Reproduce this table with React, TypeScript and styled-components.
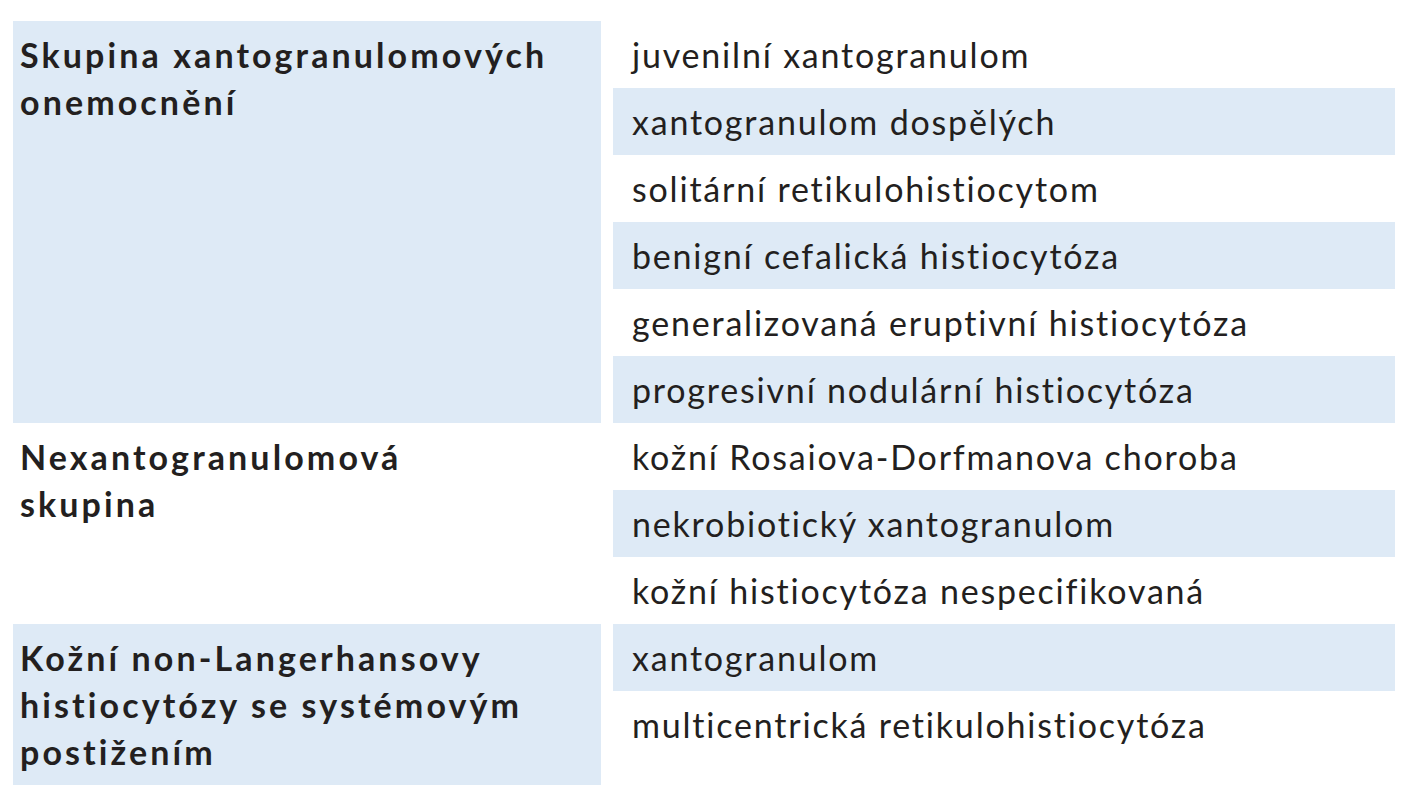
import { Fragment } from 'react';
import styled, { createGlobalStyle } from 'styled-components';

const GlobalStyle = createGlobalStyle`
  body {
    margin: 0;
    background: #ffffff;
    font-family: Lato, "Noto Sans", sans-serif;
    color: #231f20;
  }
`;

const blue = '#deeaf6';

const Table = styled.div`
  display: grid;
  grid-template-columns: 588px 782px;
  column-gap: 12px;
  padding: 21px 0 0 13px;
`;

const Category = styled.div<{ $shaded: boolean }>`
  background: ${(props) => (props.$shaded ? blue : 'transparent')};
  padding: 10px 6px 10px 7px;
  font-size: 34px;
  font-weight: 700;
  line-height: 47px;
  letter-spacing: 3.1px;
`;

const Items = styled.div`
  display: flex;
  flex-direction: column;
`;

const Item = styled.div<{ $shaded: boolean }>`
  display: flex;
  align-items: center;
  height: 67px;
  padding-left: 19px;
  background: ${(props) => (props.$shaded ? blue : 'transparent')};
  font-size: 34px;
  letter-spacing: 1.8px;
  white-space: nowrap;
`;

const groups = [
  {
    title: ['Skupina xantogranulomových', 'onemocnění'],
    shaded: true,
    items: [
      'juvenilní xantogranulom',
      'xantogranulom dospělých',
      'solitární retikulohistiocytom',
      'benigní cefalická histiocytóza',
      'generalizovaná eruptivní histiocytóza',
      'progresivní nodulární histiocytóza',
    ],
  },
  {
    title: ['Nexantogranulomová', 'skupina'],
    shaded: false,
    items: [
      'kožní Rosaiova-Dorfmanova choroba',
      'nekrobiotický xantogranulom',
      'kožní histiocytóza nespecifikovaná',
    ],
  },
  {
    title: ['Kožní non-Langerhansovy', 'histiocytózy se systémovým', 'postižením'],
    shaded: true,
    items: ['xantogranulom', 'multicentrická retikulohistiocytóza'],
  },
];

const App = () => {
  let index = 0;
  return (
    <>
      <GlobalStyle />
      <Table>
        {groups.map((group) => (
          <Fragment key={group.title[0]}>
            <Category $shaded={group.shaded}>
              {group.title.map((line) => (
                <div key={line}>{line}</div>
              ))}
            </Category>
            <Items>
              {group.items.map((item) => {
                // rows alternate across the whole table, not per group
                const shaded = index % 2 === 1;
                index += 1;
                return (
                  <Item key={item} $shaded={shaded}>
                    {item}
                  </Item>
                );
              })}
            </Items>
          </Fragment>
        ))}
      </Table>
    </>
  );
};

export default App;
